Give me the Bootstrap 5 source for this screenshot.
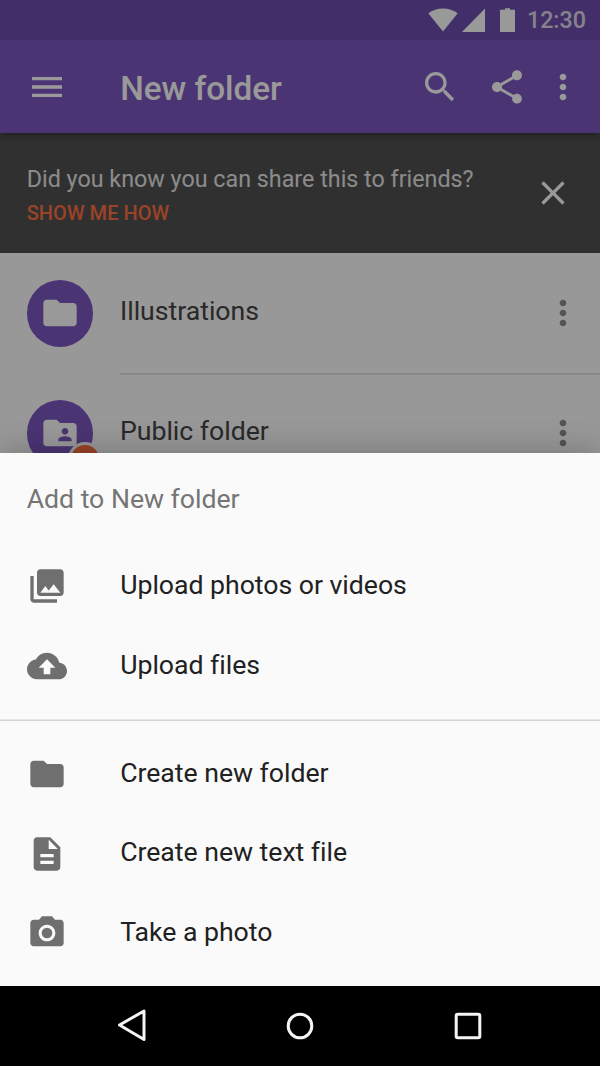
<!DOCTYPE html>
<html lang="en">
<head>
<meta charset="utf-8">
<meta name="viewport" content="width=device-width, initial-scale=1">
<title>New folder</title>
<link href="https://cdn.jsdelivr.net/npm/bootstrap@5.3.0/dist/css/bootstrap.min.css" rel="stylesheet">
<style>
  body { font-family: Roboto, "Liberation Sans", sans-serif; background: #000; line-height: 1; }
  svg { display: block; flex: none; }
  .ic { width: 40px; height: 40px; fill: currentColor; }
  .icon-btn { border: 0; background: none; padding: 0; color: inherit; }
  .screen { width: 600px; height: 1066px; }
  .stage { height: 986px; background: #fdfdfd; }
  .status { height: 40px; background: #6f4ead; color: #fff; padding-right: 14px; }
  .status svg { fill: #fff; }
  .clock { font-size: 23.3px; font-weight: 500; margin-left: 12px; padding-top: 2px; color: #e0dbe9; }
  .appbar { height: 93.3px; background: #7e57c2; color: #fff; padding: 0 16.7px 0 26.7px; box-shadow: 0 4px 6px -1px rgba(0,0,0,.3); }
  .appbar h1 { font-size: 33.3px; font-weight: 500; margin-left: 53.5px; padding-top: 4px; letter-spacing: -.03px; }
  .tip { height: 120px; background: #505050; color: #fff; padding: 0 26.7px; }
  .tip p { font-size: 23.3px; line-height: 28px; color: #e8e8e8; margin-top: 4px; }
  .tip a { font-size: 20px; font-weight: 500; line-height: 24px; color: #ff7043; margin-top: 8px; letter-spacing: .05px; }
  .entry { height: 120px; padding-left: 26.7px; }
  .entry .body-cell { height: 122px; margin: 2px 0 0 26.6px; padding-right: 16.8px; border-bottom: 2px solid #e3e3e3; }
  .entry .name { font-size: 26.67px; color: #454545; margin-top: -3.4px; letter-spacing: -.02px; }
  .entry .ic-more { color: #8c8c8c; }
  .avatar { width: 66.7px; height: 66.7px; background: #7e57c2; color: #fff; }
  .dot { width: 34px; height: 34px; left: 41px; top: 42px; border: 3px solid #fdfdfd; background: #ff7043; }
  .scrim { background: rgba(0,0,0,.4); }
  .sheet { height: 533px; background: #fafafa; box-shadow: 0 0 32px rgba(0,0,0,.24); }
  .sheet h2 { font-size: 26.67px; font-weight: 400; line-height: 32px; padding: 30px 26.7px 0; height: 93px; color: #757575; letter-spacing: -.02px; }
  .action { height: 80px; padding-left: 26.7px; color: #6f6f6f; text-decoration: none; }
  .action.low { height: 79px; }
  .action span { font-size: 26.67px; color: #212121; margin: -1.4px 0 0 53.5px; letter-spacing: -.03px; }
  .rule { height: 2px; background: #d4d4d4; border-top: 1px solid #e6e6e6; margin: 13px 0; }
  .navkeys { height: 80px; background: #000; padding-right: 1.5px; }
  .navkeys svg { fill: none; stroke: #f5f5f5; stroke-width: 3; }
</style>
</head>
<body>
<svg class="d-none" xmlns="http://www.w3.org/2000/svg">
  <symbol id="more" viewBox="0 0 24 24"><path d="M12 8c1.1 0 2-.9 2-2s-.9-2-2-2-2 .9-2 2 .9 2 2 2zm0 2c-1.1 0-2 .9-2 2s.9 2 2 2 2-.9 2-2-.9-2-2-2zm0 6c-1.1 0-2 .9-2 2s.9 2 2 2 2-.9 2-2-.9-2-2-2z"/></symbol>
  <symbol id="folder" viewBox="0 0 24 24"><path d="M10 4H4c-1.100 0-1.990.9-1.990 2L2 18c0 1.100.9 2 2 2h16c1.100 0 2-.9 2-2V8c0-1.100-.9-2-2-2h-8l-2-2z"/></symbol>
</svg>
<div class="screen d-flex flex-column overflow-hidden">
  <div class="stage position-relative overflow-hidden">
    <div class="status d-flex align-items-center justify-content-end">
      <svg width="30" height="24" viewBox="0 0 30 24"><path d="M15 23.500L.3 5.200C4.500 2 9.500.4 15 .4S25.500 2 29.700 5.200z"/></svg>
      <svg class="ms-1" width="23" height="24" viewBox="0 0 23 24"><path d="M0 24L23 .6V24z"/></svg>
      <svg width="15" height="24" viewBox="0 0 15 24" style="margin-left:15px"><path d="M5 .3h5v1.500h5V24H0V1.800h5z"/></svg>
      <span class="clock">12:30</span>
    </div>
    <header class="appbar d-flex align-items-center position-relative z-1">
      <button class="icon-btn" aria-label="Menu"><svg class="ic" viewBox="0 0 24 24"><path d="M3 18h18v-2H3v2zm0-5h18v-2H3v2zm0-7v2h18V6H3z"/></svg></button>
      <h1 class="mb-0 me-auto">New folder</h1>
      <button class="icon-btn" aria-label="Search"><svg class="ic" viewBox="0 0 24 24"><path d="M15.500 14h-.79l-.28-.27C15.410 12.590 16 11.110 16 9.500 16 5.910 13.090 3 9.500 3S3 5.910 3 9.500 5.910 16 9.500 16c1.610 0 3.090-.59 4.230-1.570l.27.28v.79l5 4.990L20.490 19l-4.990-5zm-6 0C7.010 14 5 11.990 5 9.500S7.010 5 9.500 5 14 7.010 14 9.500 11.990 14 9.500 14z"/></svg></button>
      <button class="icon-btn" aria-label="Share" style="margin:0 16.6px 0 26.7px"><svg class="ic" viewBox="0 0 24 24"><path d="M18 16.080c-.76 0-1.440.3-1.960.77L8.910 12.700c.05-.23.09-.46.09-.7s-.04-.47-.09-.7l7.050-4.110c.54.5 1.250.81 2.040.81 1.660 0 3-1.340 3-3s-1.340-3-3-3-3 1.340-3 3c0 .24.040.47.090.7L8.040 9.810C7.500 9.310 6.790 9 6 9c-1.660 0-3 1.340-3 3s1.340 3 3 3c.79 0 1.500-.31 2.040-.81l7.120 4.160c-.05.21-.08.43-.08.65 0 1.610 1.310 2.920 2.920 2.920s2.920-1.310 2.920-2.920-1.310-2.920-2.920-2.920z"/></svg></button>
      <button class="icon-btn" aria-label="More"><svg class="ic"><use href="#more"/></svg></button>
    </header>

    <section class="tip d-flex align-items-center justify-content-between">
      <div class="d-flex flex-column align-items-start">
        <p class="mb-0">Did you know you can share this to friends?</p>
        <a class="text-decoration-none" href="#">SHOW ME HOW</a>
      </div>
      <button class="icon-btn" aria-label="Dismiss"><svg class="ic" viewBox="0 0 24 24"><path d="M19 6.410L17.590 5 12 10.590 6.410 5 5 6.410 10.590 12 5 17.590 6.410 19 12 13.410 17.590 19 19 17.590 13.410 12z"/></svg></button>
    </section>

    <div class="entry d-flex align-items-center">
      <div class="avatar rounded-circle d-flex align-items-center justify-content-center"><svg class="ic"><use href="#folder"/></svg></div>
      <div class="body-cell flex-fill d-flex align-items-center justify-content-between">
        <span class="name">Illustrations</span>
        <svg class="ic ic-more"><use href="#more"/></svg>
      </div>
    </div>
    <div class="entry d-flex align-items-center">
      <div class="avatar rounded-circle d-flex align-items-center justify-content-center position-relative">
        <svg class="ic" viewBox="0 0 24 24"><path d="M20 6h-8l-2-2H4c-1.100 0-1.990.9-1.990 2L2 18c0 1.100.9 2 2 2h16c1.100 0 2-.9 2-2V8c0-1.100-.9-2-2-2zm-5 3c1.100 0 2 .9 2 2s-.9 2-2 2-2-.9-2-2 .9-2 2-2zm4 8h-8v-1c0-1.330 2.670-2 4-2s4 .67 4 2v1z"/></svg>
        <span class="dot position-absolute rounded-circle"></span>
      </div>
      <div class="body-cell flex-fill d-flex align-items-center justify-content-between">
        <span class="name">Public folder</span>
        <svg class="ic ic-more"><use href="#more"/></svg>
      </div>
    </div>

    <div class="scrim position-absolute top-0 start-0 w-100 h-100 z-2"></div>
    <div class="sheet position-absolute bottom-0 start-0 w-100 z-3">
      <h2 class="mb-0">Add to New folder</h2>
      <a class="action d-flex align-items-center" href="#"><svg class="ic" viewBox="0 0 24 24"><path d="M22 16V4c0-1.100-.9-2-2-2H8c-1.100 0-2 .9-2 2v12c0 1.100.9 2 2 2h12c1.100 0 2-.9 2-2zm-11-4l2.030 2.710L16 11l4 5H8l3-4zM2 6v14c0 1.100.9 2 2 2h14v-2H4V6H2z"/></svg><span>Upload photos or videos</span></a>
      <a class="action d-flex align-items-center" href="#"><svg class="ic" viewBox="0 0 24 24"><path d="M19.350 10.040C18.670 6.590 15.640 4 12 4 9.110 4 6.600 5.640 5.350 8.040 2.340 8.360 0 10.910 0 14c0 3.310 2.690 6 6 6h13c2.760 0 5-2.240 5-5 0-2.640-2.050-4.780-4.650-4.960zM14 13v4h-4v-4H7l5-5 5 5h-3z"/></svg><span>Upload files</span></a>
      <div class="rule"></div>
      <a class="action d-flex align-items-center" href="#"><svg class="ic"><use href="#folder"/></svg><span>Create new folder</span></a>
      <a class="action low d-flex align-items-center" href="#"><svg class="ic" viewBox="0 0 24 24"><path d="M14 2H6c-1.100 0-1.990.9-1.990 2L4 20c0 1.100.89 2 1.990 2H18c1.100 0 2-.9 2-2V8l-6-6zm2 16H8v-2h8v2zm0-4H8v-2h8v2zm-3-5V3.500L18.500 9H13z"/></svg><span>Create new text file</span></a>
      <a class="action d-flex align-items-center" href="#"><svg class="ic" viewBox="0 0 24 24"><path fill-rule="evenodd" d="M9 2L7.170 4H4c-1.100 0-2 .9-2 2v12c0 1.100.9 2 2 2h16c1.100 0 2-.9 2-2V6c0-1.100-.9-2-2-2h-3.170L15 2H9zm3 15c-2.760 0-5-2.240-5-5s2.240-5 5-5 5 2.240 5 5-2.240 5-5 5z"/><circle cx="12" cy="12" r="3.200"/></svg><span>Take a photo</span></a>
    </div>
  </div>

  <nav class="navkeys d-flex align-items-center justify-content-center">
    <svg width="32" height="36" viewBox="0 0 32 36"><path stroke-linejoin="round" d="M3.500 17L28 3v28.500z"/></svg>
    <svg width="30" height="30" viewBox="0 0 30 30" style="margin:0 138px 0 137px"><circle cx="15" cy="15" r="11.800"/></svg>
    <svg width="30" height="30" viewBox="0 0 30 30"><rect x="3.200" y="3.200" width="23.600" height="23.600" rx="1.500"/></svg>
  </nav>
</div>
<script src="https://cdn.jsdelivr.net/npm/bootstrap@5.3.0/dist/js/bootstrap.bundle.min.js"></script>
</body>
</html>
